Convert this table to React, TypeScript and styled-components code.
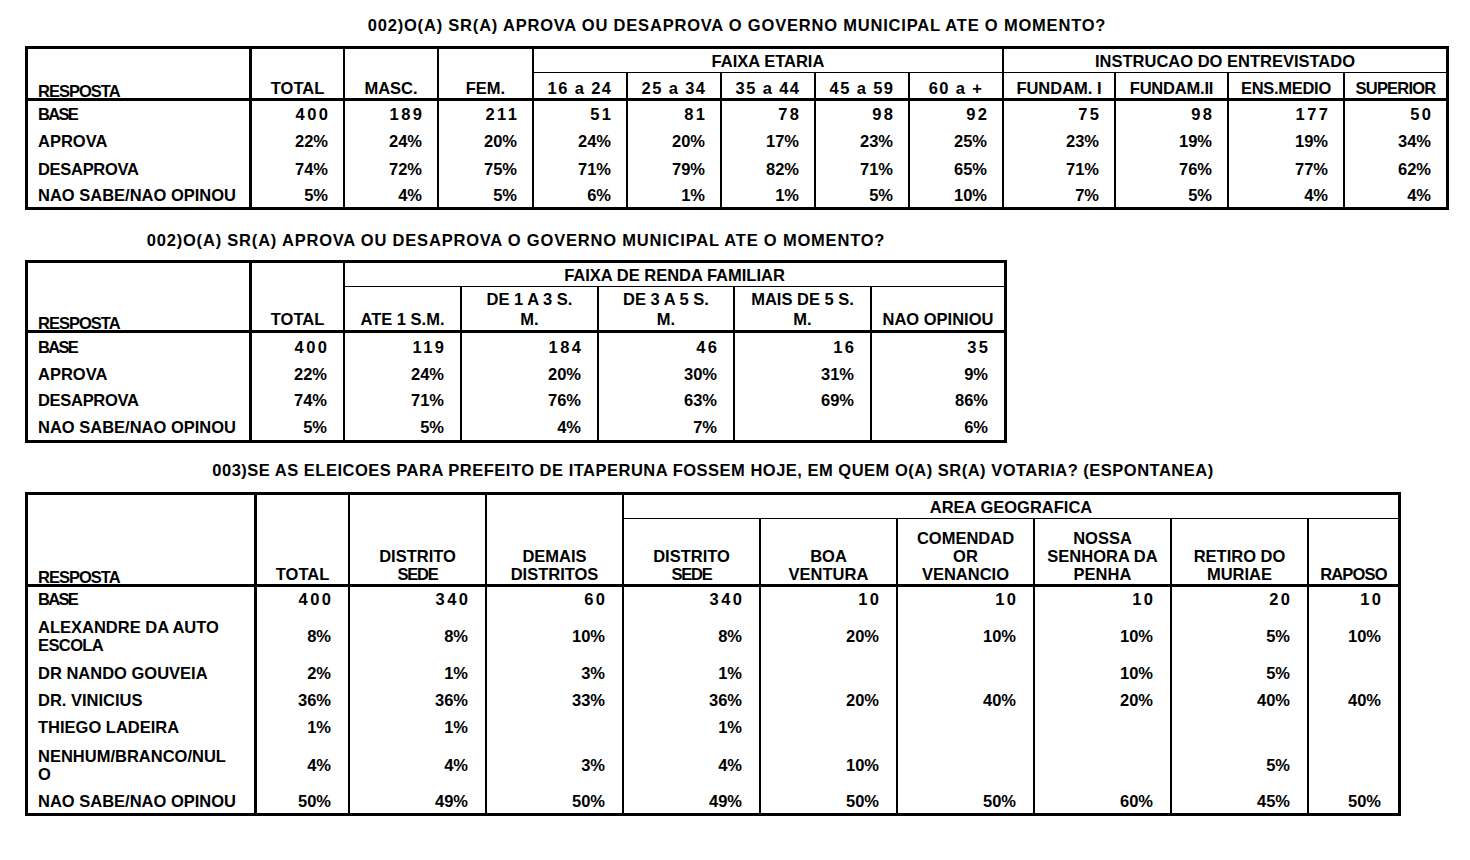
import React from "react";
import styled, { createGlobalStyle } from "styled-components";

const GlobalStyle = createGlobalStyle`
  html, body { margin: 0; padding: 0; background: #ffffff; }
  body {
    font-family: "Liberation Sans", Arial, sans-serif;
    color: #000000;
  }
`;

const Page = styled.main`
  display: flex;
  flex-direction: column;
  align-items: flex-start;
  padding: 15px 0 0 25px;
`;

const Section = styled.section<{ $gap: number }>`
  display: flex;
  flex-direction: column;
  align-items: center;
  margin-bottom: ${(p) => p.$gap}px;
`;

const Title = styled.h2<{ $mb: number; $ls: number }>`
  margin: 0 0 ${(p) => p.$mb}px;
  font-size: 16.5px;
  font-weight: 700;
  line-height: 20px;
  letter-spacing: ${(p) => p.$ls}px;
  white-space: nowrap;
`;

const Grid = styled.div<{ $cols: string; $rows: string }>`
  display: grid;
  grid-template-columns: ${(p) => p.$cols};
  grid-template-rows: ${(p) => p.$rows};
  border: 3px solid #000;
  font-size: 16.5px;
  font-weight: 700;
`;

const HeadCell = styled.div<{
  $col: number;
  $span: number;
  $row: number;
  $rowSpan: number;
  $br: number;
  $bb: number;
  $kind: "label" | "group" | "col";
  $lh: number;
}>`
  box-sizing: border-box;
  grid-column: ${(p) => p.$col} / span ${(p) => p.$span};
  grid-row: ${(p) => p.$row} / span ${(p) => p.$rowSpan};
  border-right: ${(p) => p.$br}px solid #000;
  border-bottom: ${(p) => p.$bb}px solid #000;
  display: flex;
  align-items: ${(p) => (p.$kind === "group" ? "center" : "flex-end")};
  justify-content: ${(p) => (p.$kind === "label" ? "flex-start" : "center")};
  text-align: center;
  padding: ${(p) => (p.$kind === "label" ? "0 0 0 10px" : p.$kind === "group" ? "0" : "0 2px 1px")};
  line-height: ${(p) => (p.$kind === "label" ? 14 : p.$lh)}px;
  white-space: nowrap;
`;

const Txt = styled.span<{ $ls?: number }>`
  letter-spacing: ${(p) => p.$ls ?? 0}px;
`;

const LabelCell = styled.div<{ $row: number }>`
  box-sizing: border-box;
  grid-column: 1 / span 1;
  grid-row: ${(p) => p.$row} / span 1;
  border-right: 3px solid #000;
  display: flex;
  align-items: center;
  padding-left: 10px;
  line-height: 18px;
  white-space: nowrap;
`;

const ValueCell = styled.div<{ $row: number; $col: number; $br: number; $base: boolean; $padR: number }>`
  box-sizing: border-box;
  grid-column: ${(p) => p.$col} / span 1;
  grid-row: ${(p) => p.$row} / span 1;
  border-right: ${(p) => p.$br}px solid #000;
  display: flex;
  align-items: center;
  justify-content: flex-end;
  padding-right: ${(p) => (p.$base ? p.$padR - 2.5 : p.$padR)}px;
  letter-spacing: ${(p) => (p.$base ? 2.5 : 0)}px;
  line-height: 18px;
  white-space: nowrap;
`;

type Head = {
  lines: string[];
  col: number;
  span?: number;
  row: 1 | 2;
  rowSpan?: number;
  kind: "label" | "group" | "col";
  ls?: number;
};

type Line = { text: string; ls?: number };

type BodyRow = { label: Line[]; values: string[] };

type Spec = {
  title: string;
  titleLs: number;
  titleMb: number;
  gap: number;
  cols: number[];
  rows: number[];
  headLh: number;
  padR: number;
  heads: Head[];
  body: BodyRow[];
};

const L = (text: string, ls?: number): Line => ({ text, ls });

const lines = (ls: Line[]) =>
  ls.map((l, i) => (
    <React.Fragment key={i}>
      {i > 0 && <br />}
      <Txt $ls={l.ls}>{l.text}</Txt>
    </React.Fragment>
  ));

const RESP: Head = { lines: ["RESPOSTA"], col: 1, row: 1, rowSpan: 2, kind: "label", ls: -1 };
const BASE = [L("BASE", -1.7)];
const APROVA = [L("APROVA")];
const DESAPROVA = [L("DESAPROVA", -0.3)];
const NSNO = [L("NAO SABE/NAO OPINOU")];

const specs: Spec[] = [
  {
    title: "002)O(A) SR(A) APROVA OU DESAPROVA O GOVERNO MUNICIPAL ATE O MOMENTO?",
    titleLs: 0.8,
    titleMb: 11,
    gap: 20,
    cols: [224, 93, 94, 95, 94, 94, 94, 94, 94, 112, 113, 116, 101],
    rows: [24, 28, 26, 28, 27, 25],
    headLh: 18,
    padR: 15,
    heads: [
      RESP,
      { lines: ["TOTAL"], col: 2, row: 1, rowSpan: 2, kind: "col" },
      { lines: ["MASC."], col: 3, row: 1, rowSpan: 2, kind: "col" },
      { lines: ["FEM."], col: 4, row: 1, rowSpan: 2, kind: "col" },
      { lines: ["FAIXA ETARIA"], col: 5, span: 5, row: 1, kind: "group" },
      { lines: ["INSTRUCAO DO ENTREVISTADO"], col: 10, span: 4, row: 1, kind: "group" },
      { lines: ["16 a 24"], col: 5, row: 2, kind: "col", ls: 1.4 },
      { lines: ["25 a 34"], col: 6, row: 2, kind: "col", ls: 1.4 },
      { lines: ["35 a 44"], col: 7, row: 2, kind: "col", ls: 1.4 },
      { lines: ["45 a 59"], col: 8, row: 2, kind: "col", ls: 1.4 },
      { lines: ["60 a +"], col: 9, row: 2, kind: "col", ls: 1.4 },
      { lines: ["FUNDAM. I"], col: 10, row: 2, kind: "col" },
      { lines: ["FUNDAM.II"], col: 11, row: 2, kind: "col", ls: -0.2 },
      { lines: ["ENS.MEDIO"], col: 12, row: 2, kind: "col", ls: -0.3 },
      { lines: ["SUPERIOR"], col: 13, row: 2, kind: "col", ls: -0.8 },
    ],
    body: [
      { label: BASE, values: ["400", "189", "211", "51", "81", "78", "98", "92", "75", "98", "177", "50"] },
      { label: APROVA, values: ["22%", "24%", "20%", "24%", "20%", "17%", "23%", "25%", "23%", "19%", "19%", "34%"] },
      { label: DESAPROVA, values: ["74%", "72%", "75%", "71%", "79%", "82%", "71%", "65%", "71%", "76%", "77%", "62%"] },
      { label: NSNO, values: ["5%", "4%", "5%", "6%", "1%", "1%", "5%", "10%", "7%", "5%", "4%", "4%"] },
    ],
  },
  {
    title: "002)O(A) SR(A) APROVA OU DESAPROVA O GOVERNO MUNICIPAL ATE O MOMENTO?",
    titleLs: 0.8,
    titleMb: 10,
    gap: 17,
    cols: [224, 93, 117, 137, 136, 137, 132],
    rows: [24, 46, 27, 27, 26, 27],
    headLh: 20,
    padR: 16,
    heads: [
      RESP,
      { lines: ["TOTAL"], col: 2, row: 1, rowSpan: 2, kind: "col" },
      { lines: ["FAIXA DE RENDA FAMILIAR"], col: 3, span: 5, row: 1, kind: "group" },
      { lines: ["ATE 1 S.M."], col: 3, row: 2, kind: "col" },
      { lines: ["DE 1 A 3 S.", "M."], col: 4, row: 2, kind: "col" },
      { lines: ["DE 3 A 5 S.", "M."], col: 5, row: 2, kind: "col" },
      { lines: ["MAIS DE 5 S.", "M."], col: 6, row: 2, kind: "col" },
      { lines: ["NAO OPINIOU"], col: 7, row: 2, kind: "col" },
    ],
    body: [
      { label: BASE, values: ["400", "119", "184", "46", "16", "35"] },
      { label: APROVA, values: ["22%", "24%", "20%", "30%", "31%", "9%"] },
      { label: DESAPROVA, values: ["74%", "71%", "76%", "63%", "69%", "86%"] },
      { label: NSNO, values: ["5%", "5%", "4%", "7%", "", "6%"] },
    ],
  },
  {
    title:
      "003)SE AS ELEICOES PARA PREFEITO DE ITAPERUNA FOSSEM HOJE, EM QUEM O(A) SR(A) VOTARIA? (ESPONTANEA)",
    titleLs: 0.5,
    titleMb: 12,
    gap: 0,
    cols: [229, 93, 137, 137, 137, 137, 137, 137, 137, 89],
    rows: [24, 68, 24, 49, 26, 27, 27, 49, 24],
    headLh: 18,
    padR: 17,
    heads: [
      RESP,
      { lines: ["TOTAL"], col: 2, row: 1, rowSpan: 2, kind: "col" },
      { lines: ["DISTRITO", "SEDE"], col: 3, row: 1, rowSpan: 2, kind: "col" },
      { lines: ["DEMAIS", "DISTRITOS"], col: 4, row: 1, rowSpan: 2, kind: "col" },
      { lines: ["AREA GEOGRAFICA"], col: 5, span: 6, row: 1, kind: "group" },
      { lines: ["DISTRITO", "SEDE"], col: 5, row: 2, kind: "col" },
      { lines: ["BOA", "VENTURA"], col: 6, row: 2, kind: "col" },
      { lines: ["COMENDAD", "OR", "VENANCIO"], col: 7, row: 2, kind: "col" },
      { lines: ["NOSSA", "SENHORA DA", "PENHA"], col: 8, row: 2, kind: "col" },
      { lines: ["RETIRO DO", "MURIAE"], col: 9, row: 2, kind: "col" },
      { lines: ["RAPOSO"], col: 10, row: 2, kind: "col", ls: -0.8 },
    ],
    body: [
      { label: BASE, values: ["400", "340", "60", "340", "10", "10", "10", "20", "10"] },
      {
        label: [L("ALEXANDRE DA AUTO"), L("ESCOLA", -0.6)],
        values: ["8%", "8%", "10%", "8%", "20%", "10%", "10%", "5%", "10%"],
      },
      { label: [L("DR NANDO GOUVEIA")], values: ["2%", "1%", "3%", "1%", "", "", "10%", "5%", ""] },
      { label: [L("DR. VINICIUS")], values: ["36%", "36%", "33%", "36%", "20%", "40%", "20%", "40%", "40%"] },
      { label: [L("THIEGO LADEIRA")], values: ["1%", "1%", "", "1%", "", "", "", "", ""] },
      {
        label: [L("NENHUM/BRANCO/NUL"), L("O")],
        values: ["4%", "4%", "3%", "4%", "10%", "", "", "5%", ""],
      },
      { label: NSNO, values: ["50%", "49%", "50%", "49%", "50%", "50%", "60%", "45%", "50%"] },
    ],
  },
];

const headLines = (h: Head) =>
  lines(h.lines.map((t) => L(t, t === "SEDE" ? -1.2 : h.ls)));

function SurveyTable({ spec }: { spec: Spec }) {
  const last = spec.cols.length;
  const br = (endCol: number) => (endCol === last ? 0 : endCol === 1 ? 3 : 2);
  return (
    <Section $gap={spec.gap}>
      <Title $mb={spec.titleMb} $ls={spec.titleLs}>
        {spec.title}
      </Title>
      <Grid
        $cols={spec.cols.map((c) => `${c}px`).join(" ")}
        $rows={spec.rows.map((r) => `${r}px`).join(" ")}
      >
        {spec.heads.map((h, i) => {
          const span = h.span ?? 1;
          return (
            <HeadCell
              key={`h${i}`}
              $col={h.col}
              $span={span}
              $row={h.row}
              $rowSpan={h.rowSpan ?? 1}
              $br={br(h.col + span - 1)}
              $bb={h.kind === "group" ? 1 : 3}
              $kind={h.kind}
              $lh={spec.headLh}
            >
              <span>{headLines(h)}</span>
            </HeadCell>
          );
        })}
        {spec.body.map((r, i) => (
          <React.Fragment key={`r${i}`}>
            <LabelCell $row={i + 3}>
              <span>{lines(r.label)}</span>
            </LabelCell>
            {r.values.map((v, j) => (
              <ValueCell
                key={`v${i}-${j}`}
                $row={i + 3}
                $col={j + 2}
                $br={br(j + 2)}
                $base={i === 0}
                $padR={spec.padR}
              >
                {v}
              </ValueCell>
            ))}
          </React.Fragment>
        ))}
      </Grid>
    </Section>
  );
}

export default function App() {
  return (
    <>
      <GlobalStyle />
      <Page>
        {specs.map((s, i) => (
          <SurveyTable key={i} spec={s} />
        ))}
      </Page>
    </>
  );
}
